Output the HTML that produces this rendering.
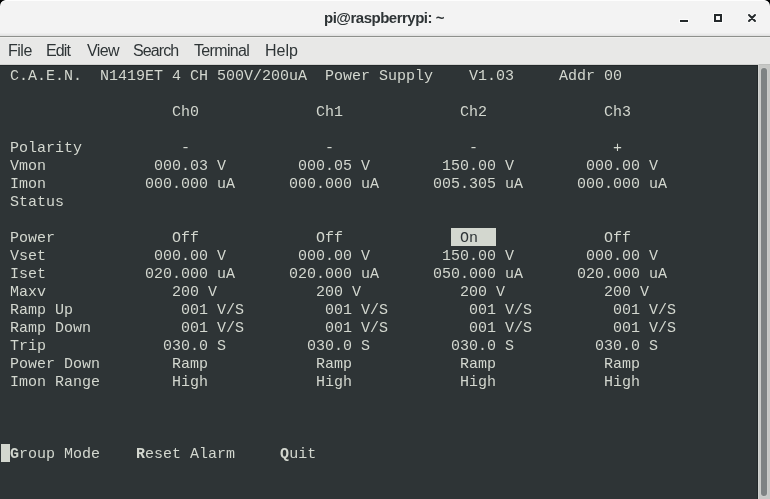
<!DOCTYPE html>
<html><head><meta charset="utf-8">
<style>
html,body{margin:0;padding:0;width:770px;height:499px;overflow:hidden;background:#000;}
#win{position:absolute;left:0;top:0;width:770px;height:499px;border-radius:6px 6px 0 0;overflow:hidden;background:#2e3436;}
#title{position:absolute;left:0;top:0;width:770px;height:36px;background:#f3f3f3;border-radius:6px 6px 0 0;box-shadow:inset 0 1px #fdfdfd,inset 0 -1px #e2e2e2,inset 0 -2px #e9e9e9,inset 0 -3px #eeeeee;}
#tline{position:absolute;left:0;top:36px;width:770px;height:1px;background:#8e908c;}
#menu{position:absolute;left:0;top:37px;width:770px;height:28px;background:#e8e8e7;box-shadow:inset 0 1px #efefed,inset 0 -1px #d2d2d0;}
#menu span{position:absolute;top:5px;font:16px "Liberation Sans",sans-serif;color:#2e3436;transform:translateZ(0);transform-origin:0 14px;}
#ttext{position:absolute;left:-1px;top:9px;width:770px;text-align:center;font:bold 15px "Liberation Sans",sans-serif;letter-spacing:-0.5px;color:#2e3436;transform:translateZ(0);}
#term{position:absolute;left:0;top:65px;width:758px;height:434px;background:#2e3436;box-shadow:inset 0 1px #23282a,inset -1px 0 #23282a;}
#sb{position:absolute;left:758px;top:64px;width:12px;height:435px;background:#c6c7c5;box-shadow:inset 1px 0 #d3d4d2,inset 0 1px #bebfbd;}
#thumb{position:absolute;left:761px;top:68px;width:6px;height:428px;border-radius:3px;background:#7e8283;box-shadow:0 0 0 1px #cbcccA;}
pre{position:absolute;margin:0;left:1px;transform:translateZ(0);font:15px/18px "Liberation Mono",monospace;color:#d3d7cf;white-space:pre;}
b{font-weight:bold;}
.inv{color:#2e3436;}
.cur{}
.blk{position:absolute;background:#d3d7cf;}
.ico{position:absolute;}
</style></head><body>
<div id="win">
<div id="title"></div>
<div id="ttext">pi@raspberrypi: ~</div>
<div id="tline"></div>
<div id="menu">
<span style="left:8px;letter-spacing:-0.5px">File</span>
<span style="left:46px;letter-spacing:-0.9px">Edit</span>
<span style="left:87px;letter-spacing:-0.6px">View</span>
<span style="left:133px;letter-spacing:-0.9px">Search</span>
<span style="left:194px;letter-spacing:-0.65px">Terminal</span>
<span style="left:265px;letter-spacing:0px">Help</span>
</div>
<div id="term"></div>
<div id="sb"></div>
<div id="thumb"></div>
<svg class="ico" style="left:670px;top:5px" width="100" height="25" viewBox="670 5 100 25">
<g fill="none" stroke="#ffffff" stroke-opacity="0.7">
<rect x="679.5" y="19.5" width="9" height="3" stroke-width="1"/>
<rect x="713.5" y="13.5" width="9" height="9" stroke-width="1"/>
<rect x="717.5" y="17.5" width="1" height="1" stroke-width="1"/>
<path d="M749 15L755 21M755 15L749 21" stroke-width="3.6" stroke-linecap="round"/>
</g>
<g fill="none" stroke="#24292b">
<rect x="680" y="20" width="8" height="2" fill="#24292b" stroke="none"/>
<rect x="715" y="15" width="6" height="6" stroke-width="2"/>
<path d="M749 15L755 21M755 15L749 21" stroke-width="2" stroke-linecap="round"/>
</g>
</svg>
<div class="blk" style="left:451px;top:228px;width:45px;height:18px"></div>
<div class="blk" style="left:1px;top:444px;width:9px;height:18px"></div>
<pre style="top:68px">
 C.A.E.N.  N1419ET 4 CH 500V/200uA  Power Supply    V1.03     Addr 00

                   Ch0             Ch1             Ch2             Ch3

 Polarity           -               -               -               +
 Vmon            000.03 V        000.05 V        150.00 V        000.00 V
 Imon           000.000 uA      000.000 uA      005.305 uA      000.000 uA
 Status

 Power             Off             Off            <span class="inv"> On  </span>            Off
 Vset            000.00 V        000.00 V        150.00 V        000.00 V
 Iset           020.000 uA      020.000 uA      050.000 uA      020.000 uA
 Maxv              200 V           200 V           200 V           200 V
 Ramp Up            001 V/S         001 V/S         001 V/S         001 V/S
 Ramp Down          001 V/S         001 V/S         001 V/S         001 V/S
 Trip             030.0 S         030.0 S         030.0 S         030.0 S
 Power Down        Ramp            Ramp            Ramp            Ramp
 Imon Range        High            High            High            High



<span class="cur"> </span><b>G</b>roup Mode    <b>R</b>eset Alarm     <b>Q</b>uit
</pre>
</div>
</body></html>
